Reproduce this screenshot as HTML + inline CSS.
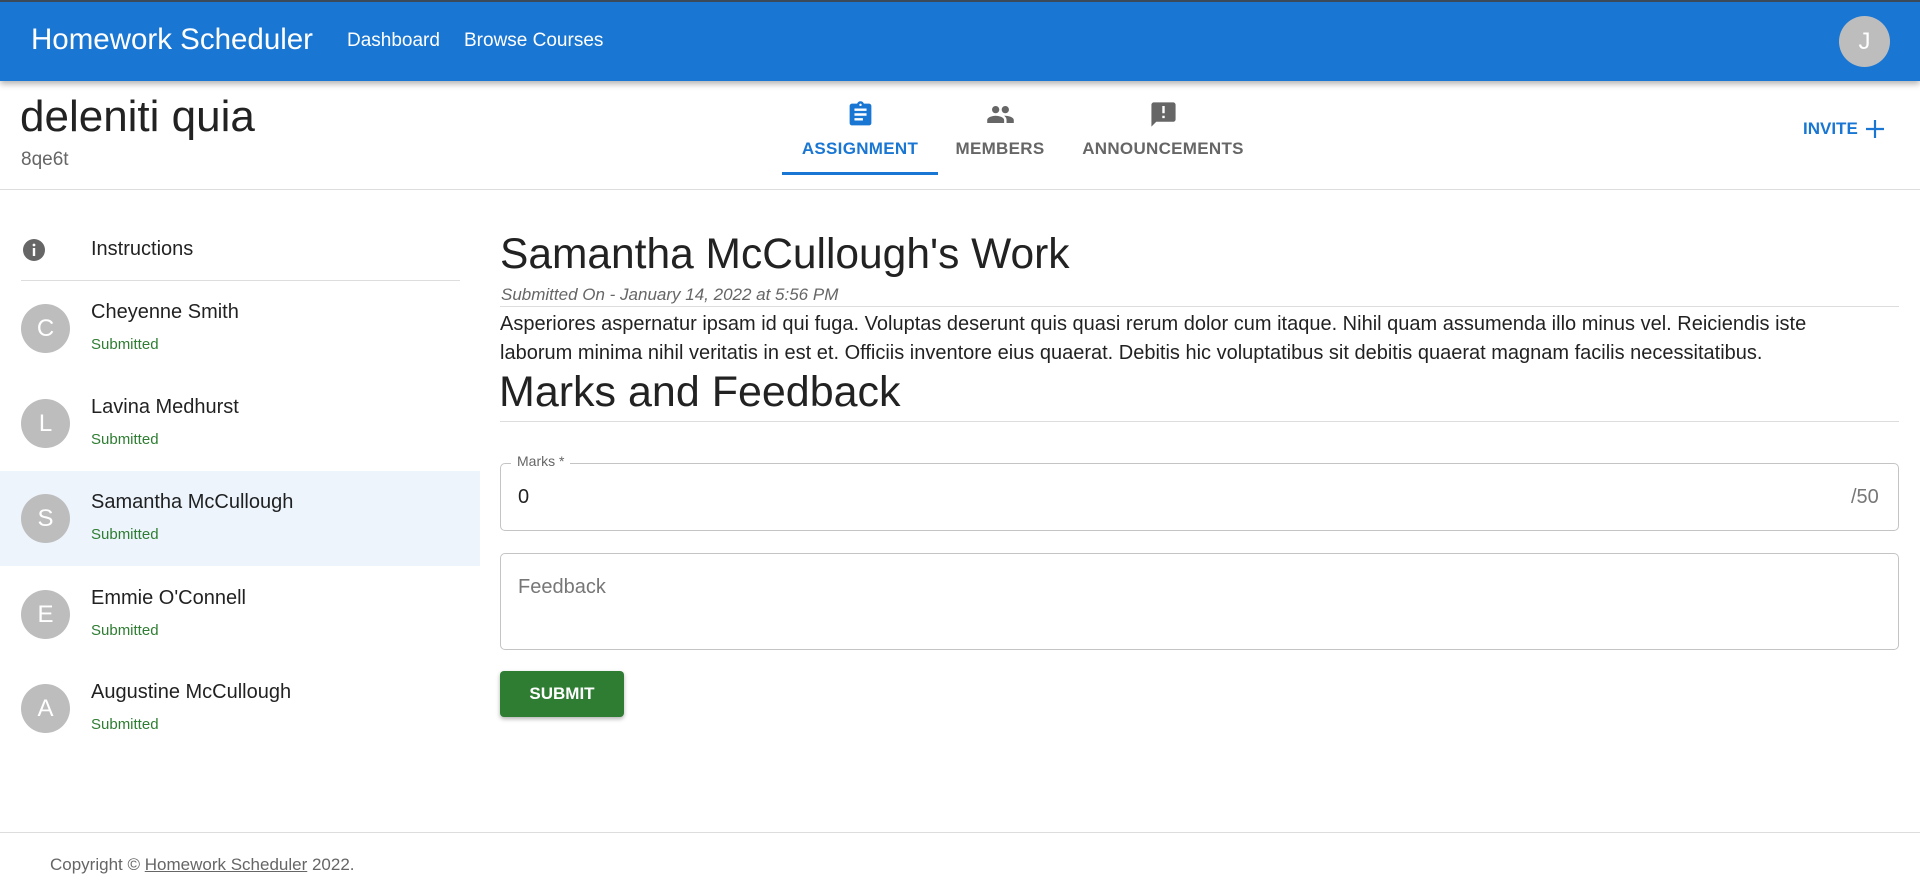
<!DOCTYPE html>
<html><head><meta charset="utf-8"><style>
*{box-sizing:border-box;margin:0;padding:0}
body{width:1920px;height:891px;overflow:hidden;background:#fff;font-family:"Liberation Sans",Arial,sans-serif;color:rgba(0,0,0,.87);position:relative}
.a{position:absolute;white-space:nowrap}
.nav{position:absolute;left:0;top:0;width:1920px;height:81px;background:#1976d2;border-top:2px solid #3a4a5a;box-shadow:0 3px 6px rgba(0,0,0,.3)}
.tab{position:absolute;top:100px;text-align:center;font-size:17px;font-weight:bold;color:#666;letter-spacing:.3px}
.tab svg{display:block;margin:0 auto 10px}
.av{position:absolute;left:21px;width:49px;height:49px;border-radius:50%;background:#bdbdbd;color:#fff;font-size:24px;text-align:center;line-height:49px}
.nm{position:absolute;left:91px;font-size:20px}
.sb{position:absolute;left:91px;font-size:15px;color:#2e7d32}
</style></head><body>
<div class="nav">
<div class="a" style="left:31px;top:21px;font-size:29.5px;color:#fff">Homework Scheduler</div>
<div class="a" style="left:347px;top:28px;font-size:19px;color:#fff">Dashboard</div>
<div class="a" style="left:464px;top:28px;font-size:19px;color:#fff">Browse Courses</div>
<div class="a" style="left:1839px;top:14px;width:51px;height:51px;border-radius:50%;background:#bdbdbd;color:#fff;font-size:24px;text-align:center;line-height:51px">J</div>
</div>
<div class="a" style="left:20px;top:92px;font-size:44px;color:#222">deleniti quia</div>
<div class="a" style="left:21px;top:149px;font-size:19px;color:#666">8qe6t</div>

<div class="tab" style="left:782px;width:156px;color:#1976d2">
<svg width="29" height="29" viewBox="0 0 24 24"><path fill="#1976d2" d="M19 3h-4.18C14.4 1.84 13.3 1 12 1s-2.4.84-2.82 2H5c-1.1 0-2 .9-2 2v14c0 1.1.9 2 2 2h14c1.1 0 2-.9 2-2V5c0-1.1-.9-2-2-2zm-7 0c.55 0 1 .45 1 1s-.45 1-1 1-1-.45-1-1 .45-1 1-1zm2 14H7v-2h7v2zm3-4H7v-2h10v2zm0-4H7V7h10v2z"/></svg>ASSIGNMENT</div>
<div class="a" style="left:782px;top:172px;width:156px;height:3px;background:#1976d2"></div>
<div class="tab" style="left:940px;width:120px">
<svg width="29" height="29" viewBox="0 0 24 24"><path fill="#666" d="M16 11c1.66 0 2.99-1.34 2.99-3S17.66 5 16 5c-1.66 0-3 1.34-3 3s1.34 3 3 3zm-8 0c1.66 0 2.99-1.34 2.99-3S9.66 5 8 5C6.34 5 5 6.34 5 8s1.34 3 3 3zm0 2c-2.33 0-7 1.17-7 3.5V19h14v-2.5c0-2.33-4.67-3.5-7-3.5zm8 0c-.29 0-.62.02-.97.05 1.16.84 1.97 1.97 1.97 3.45V19h6v-2.5c0-2.33-4.67-3.5-7-3.5z"/></svg>MEMBERS</div>
<div class="tab" style="left:1080px;width:166px">
<svg width="29" height="29" viewBox="0 0 24 24"><path fill="#666" d="M20 2H4c-1.1 0-1.99.9-1.99 2L2 22l4-4h14c1.1 0 2-.9 2-2V4c0-1.1-.9-2-2-2zm-7 9h-2V5h2v6zm0 4h-2v-2h2v2z"/></svg>ANNOUNCEMENTS</div>
<div class="a" style="left:1803px;top:119px;font-size:17px;font-weight:bold;color:#1976d2">INVITE</div>
<svg class="a" style="left:1864px;top:118px" width="22" height="22" viewBox="0 0 22 22"><path d="M11 2v18M2 11h18" stroke="#1976d2" stroke-width="2.2"/></svg>
<div class="a" style="left:0;top:189px;width:1920px;height:1px;background:#ddd"></div>

<svg class="a" style="left:22px;top:238px" width="24" height="24" viewBox="0 0 24 24"><circle cx="12" cy="12" r="11" fill="#666"/><rect x="10.8" y="10" width="2.4" height="8" fill="#fff"/><circle cx="12" cy="7" r="1.4" fill="#fff"/></svg>
<div class="nm" style="top:238px">Instructions</div>
<div class="a" style="left:21px;top:280px;width:439px;height:1px;background:#ddd"></div>
<div class="a" style="left:0;top:471px;width:480px;height:95px;background:#edf4fc"></div>

<div class="av" style="top:304px">C</div><div class="nm" style="top:301px">Cheyenne Smith</div><div class="sb" style="top:336px">Submitted</div>
<div class="av" style="top:399px">L</div><div class="nm" style="top:396px">Lavina Medhurst</div><div class="sb" style="top:431px">Submitted</div>
<div class="av" style="top:494px">S</div><div class="nm" style="top:491px">Samantha McCullough</div><div class="sb" style="top:526px">Submitted</div>
<div class="av" style="top:590px">E</div><div class="nm" style="top:587px">Emmie O'Connell</div><div class="sb" style="top:622px">Submitted</div>
<div class="av" style="top:684px">A</div><div class="nm" style="top:681px">Augustine McCullough</div><div class="sb" style="top:716px">Submitted</div>

<div class="a" style="left:500px;top:231px;font-size:42.5px;color:#222">Samantha McCullough's Work</div>
<div class="a" style="left:501px;top:285px;font-size:17px;font-style:italic;color:#666">Submitted On - January 14, 2022 at 5:56 PM</div>
<div class="a" style="left:500px;top:306px;width:1399px;height:1px;background:#ddd"></div>
<div class="a" style="left:500px;top:310px;width:1399px;font-size:20px;line-height:29px;white-space:normal">Asperiores aspernatur ipsam id qui fuga. Voluptas deserunt quis quasi rerum dolor cum itaque. Nihil quam assumenda illo minus vel. Reiciendis iste<br>laborum minima nihil veritatis in est et. Officiis inventore eius quaerat. Debitis hic voluptatibus sit debitis quaerat magnam facilis necessitatibus.</div>
<div class="a" style="left:499px;top:368px;font-size:43px;color:#222">Marks and Feedback</div>
<div class="a" style="left:500px;top:421px;width:1399px;height:1px;background:#ddd"></div>

<div class="a" style="left:500px;top:463px;width:1399px;height:68px;border:1px solid #c4c4c4;border-radius:5px"></div>
<div class="a" style="left:511px;top:453px;padding:0 6px;background:#fff;font-size:14px;color:#666">Marks *</div>
<div class="a" style="left:518px;top:486px;font-size:20px">0</div>
<div class="a" style="left:1851px;top:486px;font-size:20px;color:#777">/50</div>
<div class="a" style="left:500px;top:553px;width:1399px;height:97px;border:1px solid #c4c4c4;border-radius:5px"></div>
<div class="a" style="left:518px;top:576px;font-size:20px;color:#777">Feedback</div>
<div class="a" style="left:500px;top:671px;width:124px;height:46px;background:#2e7d32;border-radius:4px;box-shadow:0 2px 4px rgba(0,0,0,.3);color:#fff;font-size:17px;font-weight:bold;text-align:center;line-height:46px">SUBMIT</div>

<div class="a" style="left:0;top:832px;width:1920px;height:1px;background:#ddd"></div>
<div class="a" style="left:50px;top:855px;font-size:17px;color:#666">Copyright © <span style="text-decoration:underline">Homework Scheduler</span> 2022.</div>
</body></html>
